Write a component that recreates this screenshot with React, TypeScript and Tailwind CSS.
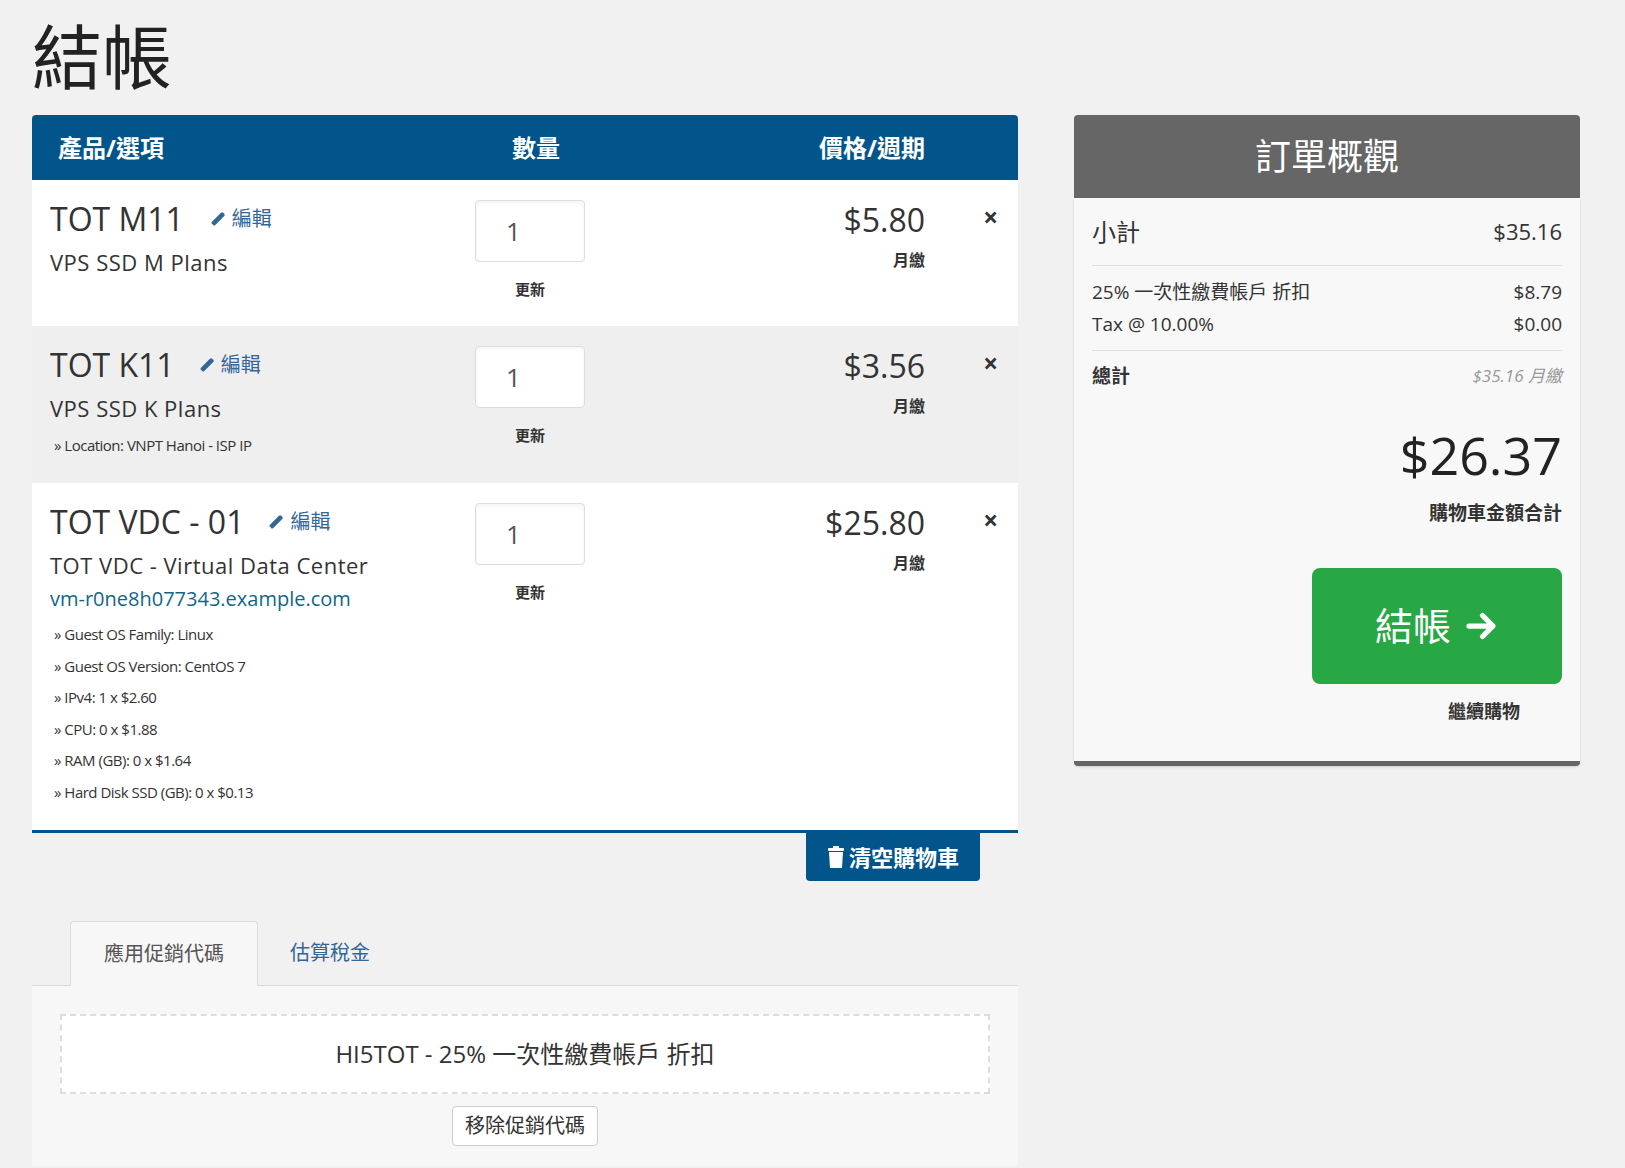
import React from "react";

const font = { fontFamily: '"Open Sans","Noto Sans CJK TC",sans-serif' };

function Pencil() {
  return (
    <svg width="20" height="20" viewBox="0 0 24 24" className="inline-block" fill="#336699">
      <path d="M3 21l1.5-5.5L15.5 4.5a2 2 0 012.8 0l1.2 1.2a2 2 0 010 2.8L8.5 19.5z M3 21l4-1.2-2.8-2.8z" />
    </svg>
  );
}

function Item({ name, desc, bg, price, extras, link, nameGap }: any) {
  return (
    <div className={`flex ${bg} px-[18px] pt-[20px] pb-[16px]`}>
      <div className="w-[425px]">
        <div className="flex items-center text-[32px] text-[#333] leading-[1.2]">
          {name}
          <span className={`${nameGap} text-[20px] text-[#336699] flex items-center gap-1`}><Pencil />編輯</span>
        </div>
        <div className="text-[22px] text-[#333] mt-[8px] tracking-[0.5px]">{desc}</div>
        {link && <div className="text-[20px] text-[#168] mt-[2px]">{link}</div>}
        {extras.map((e: string) => (
          <div key={e} className="text-[15px] text-[#333] mt-[9px] ml-[4px] tracking-[-0.5px]">» {e}</div>
        ))}
      </div>
      <div className="w-[110px] flex flex-col items-center">
        <div className="w-[110px] h-[62px] bg-white border border-[#ddd] rounded shadow-inner flex items-center pl-[30px] text-[26px] text-[#555]">1</div>
        <div className="text-[15px] font-bold text-[#333] mt-[16px]">更新</div>
      </div>
      <div className="w-[340px] flex flex-col items-end pt-[4px]">
        <div className="text-[32px] text-[#333] leading-none">{price}</div>
        <div className="text-[16px] font-bold text-[#333] mt-[12px]">月繳</div>
      </div>
      <div className="flex-1 flex justify-end pr-[2px] text-[26px] font-bold text-[#333] leading-none pt-[4px]">×</div>
    </div>
  );
}

export default function App() {
  return (
    <div style={font} className="w-[1625px] h-[1168px] bg-[#f1f1f1] overflow-hidden">
      <div className="flex gap-[56px] pl-[32px]">
        <div className="w-[986px]">
          <h1 className="text-[70px] text-[#222] leading-none pt-[22px] h-[115px]">結帳</h1>
          <div className="flex bg-[#02558b] text-white text-[24px] font-bold h-[65px] items-center rounded-t">
            <div className="w-[480px] pl-[26px]">產品/選項</div>
            <div className="w-[75px]">數量</div>
            <div className="pl-[232px]">價格/週期</div>
          </div>
          <Item name="TOT M11" nameGap="ml-[24px]" desc="VPS SSD M Plans" bg="bg-white h-[146px]" price="$5.80" extras={[]} />
          <Item name="TOT K11" nameGap="ml-[22px]" desc="VPS SSD K Plans" bg="bg-[#efefef] h-[157px]" price="$3.56" extras={["Location: VNPT Hanoi - ISP IP"]} />
          <Item name="TOT VDC - 01" nameGap="ml-[22px]" desc="TOT VDC - Virtual Data Center" link="vm-r0ne8h077343.example.com" bg="bg-white h-[347px]" price="$25.80"
            extras={["Guest OS Family: Linux", "Guest OS Version: CentOS 7", "IPv4: 1 x $2.60", "CPU: 0 x $1.88", "RAM (GB): 0 x $1.64", "Hard Disk SSD (GB): 0 x $0.13"]} />
          <div className="border-t-[3px] border-[#02558b] flex justify-end pr-[38px]">
            <div className="bg-[#02558b] text-white text-[22px] font-bold h-[48px] w-[174px] flex items-center justify-center gap-1 rounded-b">
              <svg width="18" height="22" viewBox="0 0 18 22" fill="white"><rect x="1" y="2" width="16" height="3" rx="1" /><rect x="6" y="0" width="6" height="3" /><path d="M2 6h14l-1 16H3z" /></svg>
              清空購物車
            </div>
          </div>
          <div className="mt-[40px] bg-[#f4f4f4]">
            <div className="flex border-b border-[#ddd] bg-[#f1f1f1] pl-[38px] h-[65px]">
              <div className="w-[188px] bg-[#f7f7f7] border border-[#ddd] border-b-0 rounded-t flex items-center justify-center text-[20px] text-[#555] -mb-px">應用促銷代碼</div>
              <div className="px-[32px] flex items-center text-[20px] text-[#336699]">估算稅金</div>
            </div>
            <div className="px-[28px] pt-[28px] pb-[20px] bg-[#f7f7f7]">
              <div className="border-2 border-dashed border-[#ddd] h-[80px] flex items-center justify-center text-[24px] text-[#333] bg-white">HI5TOT - 25% 一次性繳費帳戶 折扣</div>
              <div className="flex justify-center mt-[12px]">
                <div className="border border-[#ccc] bg-white rounded px-[12px] py-[4px] text-[20px] text-[#333]">移除促銷代碼</div>
              </div>
            </div>
          </div>
        </div>
        <div className="w-[506px] mt-[115px]">
          <div className="bg-[#666] text-white text-[36px] h-[83px] flex items-center justify-center rounded-t">訂單概觀</div>
          <div className="bg-[#f8f8f8] px-[18px] pb-[36px] border-b-[5px] border-[#666] rounded-b shadow">
            <div className="flex justify-between items-center h-[68px] border-b border-[#ddd] text-[24px] text-[#333]">
              <span>小計</span><span className="text-[22px]">$35.16</span>
            </div>
            <div className="border-b border-[#ddd] py-[10px] text-[19px] text-[#333] leading-[32px]">
              <div className="flex justify-between"><span>25% 一次性繳費帳戶 折扣</span><span>$8.79</span></div>
              <div className="flex justify-between"><span>Tax @ 10.00%</span><span>$0.00</span></div>
            </div>
            <div className="flex justify-between items-center h-[50px]">
              <span className="text-[19px] font-bold text-[#333]">總計</span>
              <span className="text-[17px] italic text-[#999]">$35.16 月繳</span>
            </div>
            <div className="text-right text-[52px] text-[#222] mt-[28px] leading-none">$26.37</div>
            <div className="text-right text-[19px] font-bold text-[#333] mt-[18px]">購物車金額合計</div>
            <div className="flex justify-end mt-[40px]">
              <div className="w-[250px] h-[116px] bg-[#28a745] rounded-lg flex items-center justify-center gap-3 text-white text-[38px]">
                結帳
                <svg width="36" height="36" viewBox="0 0 24 24" fill="none" stroke="white" strokeWidth="3.5" strokeLinecap="round" strokeLinejoin="round"><path d="M4 12h15M13 5l7 7-7 7" /></svg>
              </div>
            </div>
            <div className="text-right pr-[42px] mt-[14px] text-[18px] font-bold text-[#333]">繼續購物</div>
          </div>
        </div>
      </div>
    </div>
  );
}
